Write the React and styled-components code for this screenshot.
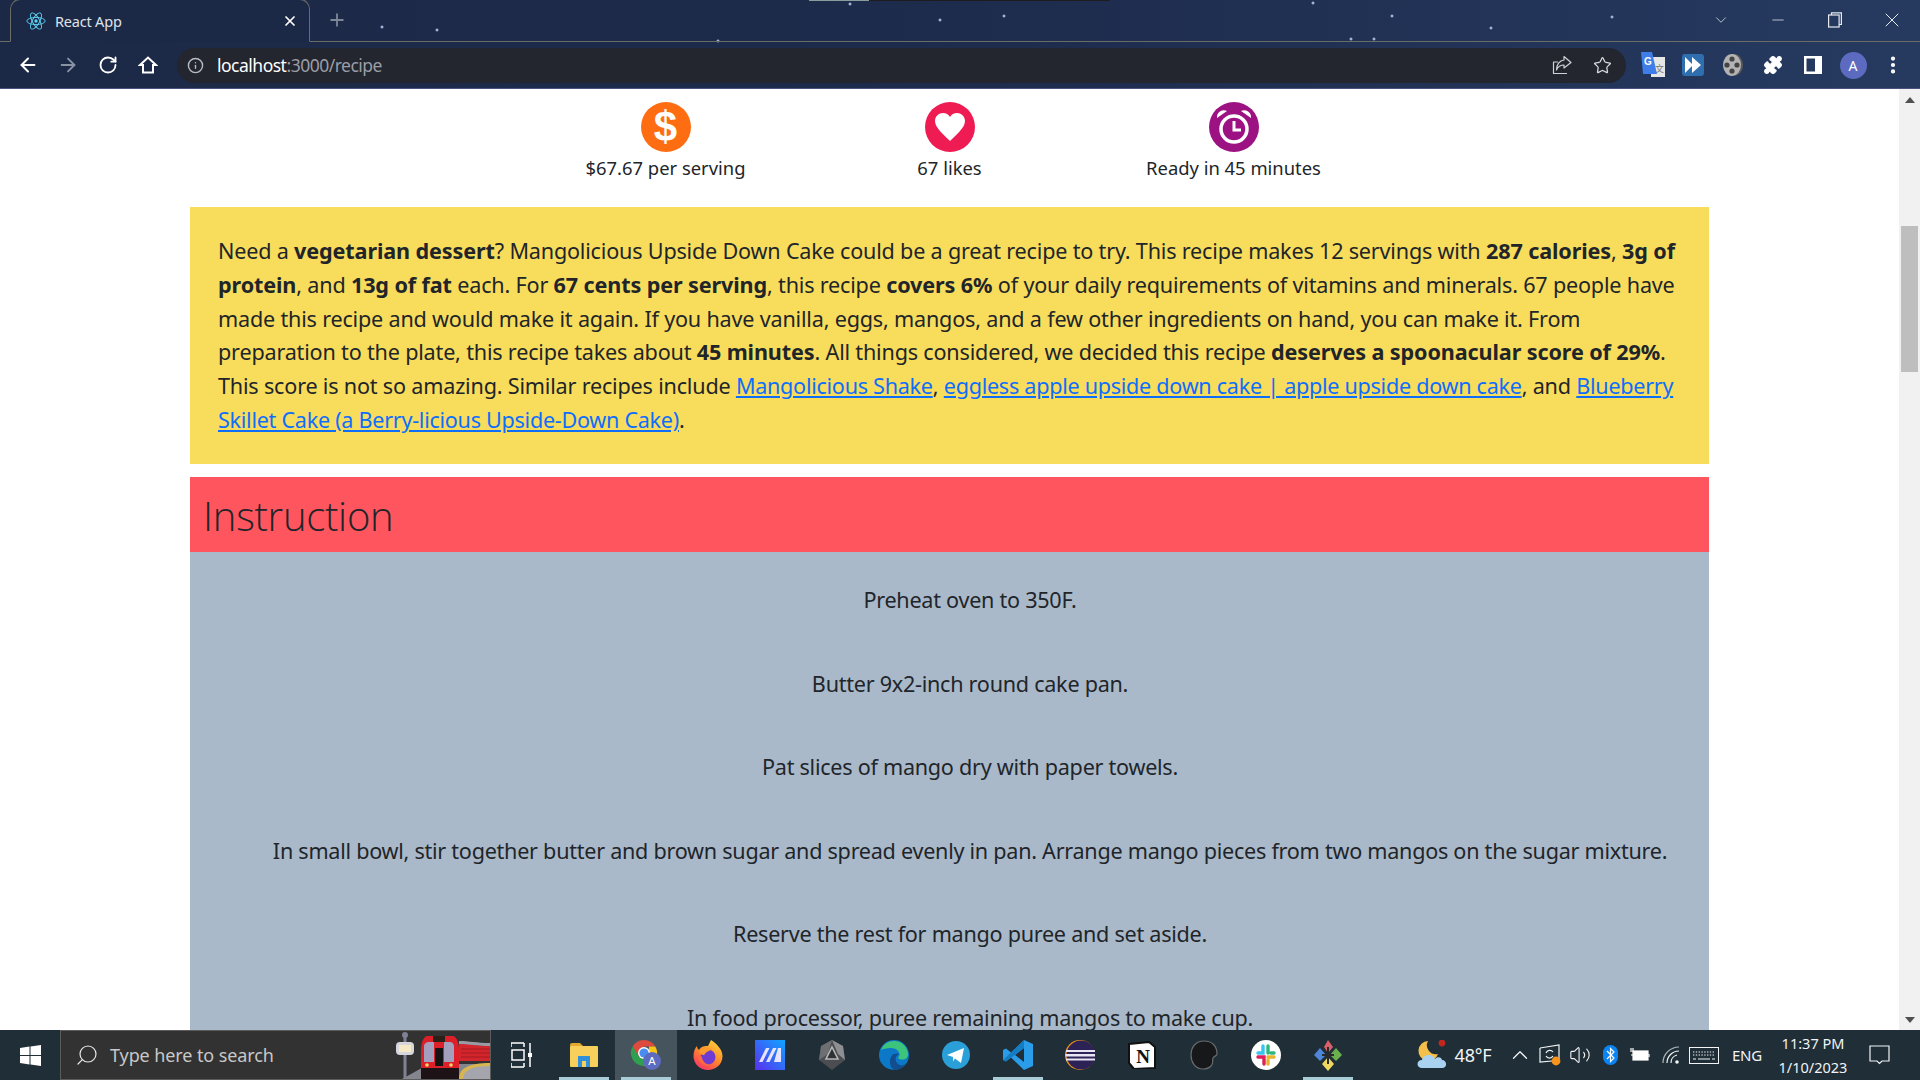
import React from 'react'
import styled, { createGlobalStyle } from 'styled-components'
import { ArrowLeft, ArrowRight, RotateCw, Info, Star, Puzzle, Search, X, Plus, ChevronDown, ChevronUp, Minus, EllipsisVertical, Volume2 } from 'lucide-react'

const GlobalStyle = createGlobalStyle`
  html, body { margin: 0; padding: 0; height: 100%; overflow: hidden; background: #fff; }
  * { box-sizing: border-box; }
`

const stars = [
  [382, 27], [437, 30], [850, 4], [940, 20], [1004, 16], [1313, 3], [1392, 16], [1491, 28], [1612, 17], [1351, 39], [1374, 39], [718, 41]
]
const starBg = stars.map(([x, y]) => `radial-gradient(circle at ${x}px ${y}px, #b9c7e6 0, #8fa3c9 1.2px, transparent 1.8px)`).join(', ')

const Screen = styled.div`
  width: 1920px;
  height: 1080px;
  display: flex;
  flex-direction: column;
  overflow: hidden;
  font-family: "Noto Sans", "Open Sans", sans-serif;
  color: #212529;
`
const BrowserChrome = styled.header`
  height: 89px;
  flex: none;
  display: flex;
  flex-direction: column;
  background:
    linear-gradient(#8b9c9c, #8b9c9c) 809px 0 / 60px 1px no-repeat,
    linear-gradient(#1d1d20, #1d1d20) 869px 0 / 241px 1px no-repeat,
    ${starBg},
    linear-gradient(90deg, #1c2946 0%, #1d2b4c 50%, #263a60 100%);
  border-bottom: 1px solid #4b5280;
`
const TabStrip = styled.div`
  height: 42px;
  flex: none;
  display: flex;
  align-items: flex-end;
  padding-left: 10px;
  border-bottom: 1px solid #6a6c66;
`
const Tab = styled.div`
  width: 300px;
  height: 43px;
  margin-bottom: -1px;
  display: flex;
  align-items: center;
  padding: 0 11px 0 15px;
  border: 1px solid #6a6c66;
  border-bottom: 1px solid #1c2946;
  border-radius: 10px 10px 0 0;
  background: #1c2946;
  color: #dfe3ea;
  font-size: 14.5px;
`
const TabTitle = styled.span`
  flex: 1;
  margin-left: 9px;
  letter-spacing: -0.2px;
`
const NewTab = styled.div`
  width: 54px;
  height: 42px;
  display: flex;
  align-items: center;
  justify-content: center;
  color: #7d8797;
`
const Spacer = styled.div`
  flex: 1;
`
const WinButton = styled.div`
  width: 57px;
  height: 42px;
  display: flex;
  align-items: center;
  justify-content: center;
  color: #e8ebf0;
`
const Toolbar = styled.div`
  flex: 1;
  display: flex;
  align-items: center;
  padding: 0 8px;
`
const ToolButton = styled.div`
  width: ${p => p.$w || 40}px;
  height: 40px;
  flex: none;
  display: flex;
  align-items: center;
  justify-content: center;
  color: ${p => p.$dim ? '#8a93a3' : '#fff'};
`
const Omnibox = styled.div`
  width: 1449px;
  height: 35px;
  margin: 0 7px 0 9px;
  flex: none;
  display: flex;
  align-items: center;
  padding: 0 4px 0 10px;
  border-radius: 18px;
  background: #23252f;
  color: #b9bcc3;
`
const Url = styled.div`
  flex: 1;
  margin-left: 13px;
  font-size: 17.5px;
  letter-spacing: -0.5px;
  color: #9b9ea6;
  span { color: #fff; }
`
const Avatar = styled.div`
  width: 27px;
  height: 27px;
  border-radius: 50%;
  background: #5c6bc0;
  color: #fff;
  font-size: 14px;
  display: flex;
  align-items: center;
  justify-content: center;
`
const Viewport = styled.div`
  flex: 1;
  min-height: 0;
  display: flex;
  overflow: hidden;
`
const Page = styled.main`
  flex: 1;
  min-width: 0;
  height: 100%;
  overflow: hidden;
  padding: 13px 190px 0 190px;
  background: #fff;
`
const Stats = styled.section`
  display: flex;
  justify-content: center;
  height: 105px;
`
const Stat = styled.div`
  width: 284px;
  display: flex;
  flex-direction: column;
  align-items: center;
  font-size: 18.4px;
  line-height: 28px;
`
const StatIcon = styled.div`
  width: 50px;
  height: 50px;
  margin-bottom: 2px;
  border-radius: 50%;
  background: ${p => p.$bg};
  display: flex;
  align-items: center;
  justify-content: center;
`
const DollarGlyph = styled.span`
  font-family: "Liberation Sans", sans-serif;
  font-weight: 700;
  font-size: 42px;
  line-height: 50px;
  color: #fff;
`
const Summary = styled.section`
  background: #f8dc5c;
  padding: 27px 28px 0;
  height: 257px;
  font-size: 21.6px;
  line-height: 33.8px;
  letter-spacing: -0.19px;
  b { font-weight: 700; letter-spacing: -0.12px; }
  a { color: #0d6efd; text-decoration: underline; letter-spacing: -0.28px; }
`
const SectionTitle = styled.h2`
  margin: 13px 0 0;
  height: 75px;
  padding: 15px 13px 0;
  background: #ff555f;
  font-family: "Open Sans", sans-serif;
  font-weight: 300;
  font-size: 40px;
  line-height: 48px;
  letter-spacing: -0.27px;
`
const Steps = styled.section`
  background: #a9b9c9;
  padding: 31px 0 60px 41px;
  text-align: center;
  font-size: 21.6px;
  letter-spacing: -0.265px;
`
const Step = styled.p`
  margin: 0 0 49.8px;
  line-height: 33.8px;
`
const Scrollbar = styled.aside`
  width: 21px;
  flex: none;
  background: #f1f1f1;
  display: flex;
  flex-direction: column;
  align-items: center;
`
const ScrollArrow = styled.div`
  height: 21px;
  flex: none;
  display: flex;
  align-items: center;
  justify-content: center;
`
const Thumb = styled.div`
  width: 17px;
  height: 146px;
  margin-top: 116px;
  flex: none;
  background: #bebebe;
`
const Taskbar = styled.footer`
  height: 50px;
  flex: none;
  display: flex;
  align-items: stretch;
  background: #1f2e37;
  color: #fff;
`
const StartButton = styled.div`
  width: 60px;
  flex: none;
  display: flex;
  align-items: center;
  justify-content: center;
`
const SearchBox = styled.div`
  width: 431px;
  flex: none;
  display: flex;
  align-items: center;
  padding-left: 14px;
  background: #323232;
  border: 1px solid #5c5c5c;
  color: #c8c8c8;
  font-size: 18px;
  overflow: hidden;
  span { flex: 1; margin-left: 11px; letter-spacing: -0.1px; }
`
const TaskButton = styled.div`
  width: 62px;
  flex: none;
  display: flex;
  align-items: center;
  justify-content: center;
  position: relative;
  background: ${p => p.$current ? '#46555d' : 'transparent'};
  &::after {
    content: '';
    display: ${p => p.$open ? 'block' : 'none'};
    position: absolute;
    left: 6px;
    right: 6px;
    bottom: 0;
    height: 3px;
    background: #a9cdd6;
  }
`
const Tray = styled.div`
  flex: 1;
  display: flex;
  align-items: center;
  padding-left: 57px;
`
const TrayItem = styled.div`
  width: ${p => p.$w}px;
  flex: none;
  display: flex;
  align-items: center;
  justify-content: center;
  padding-right: ${p => p.$pr || 0}px;
  font-size: ${p => p.$fs || 16}px;
  color: #f2f4f5;
  letter-spacing: -0.2px;
`
const Clock = styled.div`
  width: 80px;
  flex: none;
  text-align: center;
  font-size: 14.5px;
  line-height: 24px;
  color: #f2f4f5;
  white-space: nowrap;
`

function ReactLogo() {
  return (
    <svg width="20" height="20" viewBox="-12 -12 24 24" fill="none" stroke="#5ed3f3" strokeWidth="1.1">
      <circle r="2" fill="#5ed3f3" stroke="none" />
      <ellipse rx="11" ry="4.3" />
      <ellipse rx="11" ry="4.3" transform="rotate(60)" />
      <ellipse rx="11" ry="4.3" transform="rotate(120)" />
    </svg>
  )
}

function HomeIcon() {
  return (
    <svg width="20" height="20" viewBox="0 0 20 20" fill="none" stroke="#fff" strokeWidth="2" strokeLinejoin="miter">
      <path d="M2 10 L10 2.5 L18 10 H15 V17.5 H5 V10 Z" />
    </svg>
  )
}

function ShareIcon() {
  return (
    <svg width="20" height="20" viewBox="0 0 20 20" fill="none" stroke="#cfd1d6" strokeWidth="1.2" strokeLinejoin="round">
      <path d="M15 18.5 H1.5 V7 H6" />
      <path d="M12 1.5 L19 7.5 L12 13 V10 C8.5 10 6 11.5 4.5 15 C4.5 9.5 7.5 5.5 12 5Z" />
    </svg>
  )
}

function SidePanelIcon() {
  return (
    <svg width="18" height="18" viewBox="0 0 18 18">
      <path fillRule="evenodd" fill="#fff" d="M0 0H18V18H0Z M2.5 2.5V15.5H11V2.5Z" />
    </svg>
  )
}

function Translate() {
  return (
    <svg width="24" height="26" viewBox="0 0 24 26">
      <rect x="10" y="5" width="14" height="20" fill="#e6e6e6" />
      <text x="14" y="20" fontSize="9" fill="#777" fontFamily="Noto Sans CJK SC">文</text>
      <path d="M0 0H11L16 22H2Z" fill="#3f7de8" />
      <text x="3" y="13" fontSize="10" fontWeight="700" fill="#fff" fontFamily="Liberation Sans">G</text>
    </svg>
  )
}

function FastForward() {
  return (
    <svg width="22" height="22" viewBox="0 0 22 22">
      <rect width="22" height="22" rx="3" fill="#2f6fb0" />
      <path d="M3 3 L11 11 L3 19Z M10 3 L19 11 L10 19Z" fill="#fff" />
    </svg>
  )
}

function FilmReel() {
  return (
    <svg width="22" height="24" viewBox="0 0 22 24">
      <ellipse cx="12" cy="12" rx="9" ry="11" fill="#5a5a5a" />
      <ellipse cx="10" cy="12" rx="9" ry="11" fill="#b3b3b3" />
      <circle cx="10" cy="6" r="2.6" fill="#444" />
      <circle cx="10" cy="18" r="2.6" fill="#444" />
      <circle cx="5" cy="12" r="2.6" fill="#444" />
      <circle cx="15" cy="12" r="2.6" fill="#444" />
    </svg>
  )
}

function HeartIcon() {
  return (
    <svg width="32" height="30" viewBox="0 0 32 30">
      <path fill="#fff" d="M16 29 C11 24 1 16 1 9 C1 4 5 1 9 1 C12 1 14.6 2.6 16 5 C17.4 2.6 20 1 23 1 C27 1 31 4 31 9 C31 16 21 24 16 29Z" />
    </svg>
  )
}

function AlarmIcon() {
  return (
    <svg width="40" height="40" viewBox="0 0 40 40" fill="none" stroke="#fff">
      <circle cx="20" cy="22" r="13" strokeWidth="3.5" />
      <path d="M20 14 V23 H27" strokeWidth="3" />
      <path d="M3 11 A7 7 0 0 1 13 4 Z M37 11 A7 7 0 0 0 27 4 Z" fill="#fff" stroke="none" />
    </svg>
  )
}

function WindowsLogo() {
  return (
    <svg width="21" height="21" viewBox="0 0 21 21" fill="#fff">
      <path d="M0 3 L9.5 1.6 V10 H0Z M10.5 1.4 L21 0 V10 H10.5Z M0 11 H9.5 V19.4 L0 18Z M10.5 11 H21 V21 L10.5 19.6Z" />
    </svg>
  )
}

function TrainScene() {
  return (
    <svg width="105" height="48" viewBox="0 0 105 48" style={{ flex: 'none' }}>
      <path d="M20 3 V48" stroke="#7f8194" strokeWidth="3" />
      <circle cx="20" cy="4" r="3" fill="#7f8194" />
      <rect x="11" y="11" width="18" height="13" rx="4" fill="#d6d6dc" />
      <rect x="14" y="14" width="12" height="7" fill="#f5e9c6" />
      <path d="M17 48 L44 33 H105 V48Z" fill="#85858d" />
      <path d="M74 12 C84 12 90 15 105 15 V30 H74Z" fill="#d2252c" />
      <path d="M74 10 C84 10 92 12 105 12 V15 C92 15 84 13 74 13Z" fill="#9a9aa4" />
      <path d="M76 18 H105 M76 22 H105 M76 26 H105" stroke="#a81a22" strokeWidth="1.2" />
      <path d="M74 48 C74 37 84 32 105 32 V48Z" fill="#d8b54e" />
      <path d="M78 48 C78 39 87 35 105 35 V48Z" fill="#a5a5ad" />
      <path d="M42 5 H68 C72 6 74 12 74 20 V48 H36 V20 C36 12 38 6 42 5Z" fill="#dc1f28" />
      <path d="M36 37 H74 V48 H36Z" fill="#1d1316" />
      <path d="M39 15 C39 13 41 11 44 11 H49 V31 H39Z M59 11 H65 C67 11 69 13 69 15 V31 H59Z" fill="#a2a0bc" />
      <rect x="50" y="17" width="8" height="18" fill="#141414" />
      <rect x="48" y="5" width="12" height="6" fill="#2a2018" />
      <circle cx="42" cy="34" r="1.8" fill="#f2d66b" />
      <circle cx="66" cy="34" r="1.8" fill="#f2d66b" />
    </svg>
  )
}

function TaskViewIcon() {
  return (
    <svg width="22" height="26" viewBox="0 0 22 26" fill="none" stroke="#fff" strokeWidth="1.5">
      <path d="M0 1 H13 M0 25 H13 M1 8 H13 V18 H1Z M0 5 V1 M13 5 V1 M0 25 V21 M13 25 V21 M19 1 V25" />
      <rect x="17" y="11" width="4" height="4" fill="#fff" stroke="none" />
    </svg>
  )
}

function FolderIcon() {
  return (
    <svg width="28" height="26" viewBox="0 0 28 26">
      <path d="M0 3 Q0 1 2 1 H10 L13 4 H0Z" fill="#e3a92e" />
      <rect y="4" width="28" height="21" rx="1" fill="#f8cf5b" />
      <path d="M8 14 H20 V25 H16 V19 H12 V25 H8Z" fill="#2f8fd8" />
    </svg>
  )
}

function ChromeIcon() {
  return (
    <svg width="32" height="32" viewBox="0 0 32 32">
      <path d="M14 1 A13 13 0 0 1 25.3 7.5 H14 Z" fill="#dd4b3e" />
      <path d="M14 1 A13 13 0 0 0 2.7 7.5 L8 17 L14 7.5Z" fill="#dd4b3e" />
      <path d="M2.7 7.5 A13 13 0 0 0 14 27 L19 18 H9Z" fill="#2fa04d" />
      <path d="M25.3 7.5 A13 13 0 0 1 14 27 L19 18 V7.5Z" fill="#f5c518" />
      <circle cx="14" cy="14" r="6" fill="#fff" />
      <circle cx="14" cy="14" r="4.6" fill="#4a8df0" />
      <circle cx="22" cy="22" r="9" fill="#5c6bc0" />
      <text x="22" y="26" textAnchor="middle" fontSize="11" fill="#fff" fontFamily="Liberation Sans">A</text>
    </svg>
  )
}

function FirefoxIcon() {
  return (
    <svg width="30" height="30" viewBox="0 0 30 30">
      <defs>
        <linearGradient id="ff" x1="0.8" y1="0" x2="0.2" y2="1">
          <stop offset="0" stopColor="#ffd43a" />
          <stop offset="0.5" stopColor="#ff8a2a" />
          <stop offset="1" stopColor="#f5306a" />
        </linearGradient>
      </defs>
      <path d="M18 0 C24 4 30 10 29.5 17 C29 25 22 30 15 30 C7 30 0.5 24 0.5 16 C0.5 12 2 8 4 6 C4 8 5 9 6 10 C8 6 12 6 15 6 C16 4 17 2 18 0Z" fill="url(#ff)" />
      <circle cx="15" cy="17" r="7.5" fill="#6f3bd0" />
      <path d="M6 11 C9 7 15 7 19 10 C16 10.5 13 12 11 15 C9 15.5 7 14 6 11Z" fill="#ff9a2e" />
      <path d="M5 15 C5 22 11 27 18 25 C13 25 9 21 8.5 16Z" fill="#ff6b3a" />
    </svg>
  )
}

function MakeIcon() {
  return (
    <svg width="30" height="30" viewBox="0 0 30 30">
      <defs>
        <linearGradient id="mk" x1="0" y1="1" x2="1" y2="0">
          <stop offset="0" stopColor="#5b2ff0" />
          <stop offset="1" stopColor="#0ea5ff" />
        </linearGradient>
      </defs>
      <rect width="30" height="30" fill="url(#mk)" />
      <path d="M4 22 L11 8 H14.5 L7.5 22Z M11 22 L18 8 H21.5 L14.5 22Z M19 22 L23 8 H26 V22Z" fill="#e6e4ff" />
    </svg>
  )
}

function HexIcon() {
  return (
    <svg width="26" height="30" viewBox="0 0 26 30">
      <path d="M13 0 L24 6 L26 20 L13 30 L0 20 L2 6Z" fill="#4b4d50" />
      <path d="M13 0 L24 6 L26 20 L19 14Z" fill="#8d8f92" />
      <path d="M13 0 L2 6 L0 20 L9 14Z" fill="#6d6f72" />
      <path d="M13 7 L19 19 H7Z" fill="#2f3133" stroke="#b5b7b9" strokeWidth="1.6" />
    </svg>
  )
}

function EdgeIcon() {
  return (
    <svg width="30" height="30" viewBox="0 0 30 30">
      <circle cx="15" cy="15" r="15" fill="#0c78c8" />
      <path d="M2 10 C6 -2 26 -3 29 13 C30 20 22 21 19 18 C23 13 18 8 12 8 C7 8 4 9 2 10Z" fill="#3cc47c" />
      <path d="M11 22 C11 15 15 12 21 14 C16 15 15 20 19 24 C21 26 25 26 27 23 C24 28 19 30 15 30 C12 28 11 25 11 22Z" fill="#124d8f" />
    </svg>
  )
}

function TelegramIcon() {
  return (
    <svg width="28" height="28" viewBox="0 0 28 28">
      <circle cx="14" cy="14" r="14" fill="#2a9fd8" />
      <path d="M5 14 L22 7 L19 22 L13 17.5 L11 20.5 V16Z" fill="#fff" />
    </svg>
  )
}

function VsCodeIcon() {
  return (
    <svg width="30" height="30" viewBox="0 0 30 30">
      <path d="M21 0 L30 4 V26 L21 30 L8 17.5 L3 21.5 L0 20 V10 L3 8.5 L8 12.5Z M21 8 L12 15 L21 22Z" fill="#2a9ce8" fillRule="evenodd" />
      <path d="M0 20 L21 0 V8 L3 21.5Z" fill="#0e74b8" opacity="0.8" />
    </svg>
  )
}

function EclipseIcon() {
  return (
    <svg width="30" height="30" viewBox="0 0 30 30">
      <circle cx="15" cy="15" r="15" fill="#f7941e" />
      <circle cx="16" cy="15" r="14.5" fill="#2c2255" />
      <path d="M1 10 H30 V12 H1Z M0.5 14 H30 V16.5 H0.5Z M1 18.5 H30 V20.5 H1Z" fill="#e8e4f4" />
    </svg>
  )
}

function NotionIcon() {
  return (
    <svg width="28" height="28" viewBox="0 0 28 28">
      <path d="M1 3 L21 1 L27 6 V27 L6 28 L1 22Z" fill="#fff" stroke="#111" strokeWidth="2" />
      <text x="15" y="22" textAnchor="middle" fontFamily="Liberation Serif" fontWeight="700" fontSize="19" fill="#111">N</text>
    </svg>
  )
}

function DarkBlobIcon() {
  return (
    <svg width="28" height="30" viewBox="0 0 28 30">
      <path d="M14 1 C22 1 27 6 27 14 C27 16 24 16 23 18 C22 21 24 23 21 26 C18 29 15 29 13 29 C5 29 1 22 1 15 C1 7 6 1 14 1Z" fill="#17181a" stroke="#6a6c6e" strokeWidth="1.2" />
    </svg>
  )
}

function SlackIcon() {
  return (
    <svg width="30" height="30" viewBox="0 0 30 30">
      <circle cx="15" cy="15" r="15" fill="#fff" />
      <path d="M12 6 V13 H7" stroke="#36c5f0" strokeWidth="3.4" fill="none" strokeLinecap="round" />
      <path d="M17 6 V13 M20 13 H23" stroke="#2eb67d" strokeWidth="3.4" fill="none" strokeLinecap="round" />
      <path d="M7 17 H13 V24" stroke="#e01e5a" strokeWidth="3.4" fill="none" strokeLinecap="round" />
      <path d="M17 17 H23 M17 20 V24" stroke="#ecb22e" strokeWidth="3.4" fill="none" strokeLinecap="round" />
    </svg>
  )
}

function GitKrakenIcon() {
  return (
    <svg width="30" height="32" viewBox="0 0 30 32">
      <path d="M15 1 L20 8 L15 14 L11 8Z" fill="#d9606a" />
      <path d="M7 9 L13 16 L7 22 L1 16Z" fill="#4f86d8" />
      <path d="M23 9 L29 16 L23 22 L17 16Z" fill="#6ab04c" />
      <path d="M15 18 L21 25 L15 32 L9 25Z" fill="#f0d860" />
      <path d="M15 8 V25 M9 16 H21" stroke="#2a2a2a" strokeWidth="2" />
    </svg>
  )
}

function WeatherIcon() {
  return (
    <svg width="32" height="30" viewBox="0 0 32 30">
      <path d="M12 1 A10 10 0 1 0 22 14 A9 9 0 0 1 12 1Z" fill="#f4c04a" />
      <path d="M6 28 C0 28 0 20 6 20 C7 14 17 13 19 19 C21 16 26 17 26 20 C31 20 32 28 26 28Z" fill="#a9d2f0" />
      <circle cx="26" cy="3" r="3.4" fill="#c0281f" />
    </svg>
  )
}

function NetworkBoxIcon() {
  return (
    <svg width="22" height="22" viewBox="0 0 22 22" fill="none" stroke="#f2f4f5" strokeWidth="1.2">
      <path d="M1 4 L20 1 V15 M1 4 V18 L13 17" />
      <path d="M7 9 A4 4 0 0 1 14 8 M14 12 A4 4 0 0 1 7 12" />
      <circle cx="17" cy="17" r="4.4" fill="#f7941e" stroke="none" />
    </svg>
  )
}

function BluetoothIcon() {
  return (
    <svg width="15" height="20" viewBox="0 0 15 20">
      <rect width="15" height="20" rx="7.5" fill="#0a84f0" />
      <path d="M4 6 L11 13 L7.5 16.5 V3.5 L11 7 L4 14" fill="none" stroke="#fff" strokeWidth="1.2" />
    </svg>
  )
}

function BatteryIcon() {
  return (
    <svg width="20" height="16" viewBox="0 0 20 16" fill="none" stroke="#fff" strokeWidth="1.2">
      <rect x="3" y="4" width="15" height="9" fill="#fff" />
      <path d="M19 7 V10 M3 8 H1 M1 1 V5 M3 1 V5" />
    </svg>
  )
}

function WifiIcon() {
  return (
    <svg width="18" height="18" viewBox="0 0 18 18" fill="none" stroke="#f2f4f5" strokeWidth="1.2">
      <path d="M1 17 A16 16 0 0 1 17 1" opacity="0.7" />
      <path d="M5 17 A12 12 0 0 1 17 5" />
      <path d="M9 17 A8 8 0 0 1 15 9" />
      <circle cx="15" cy="16" r="1.8" fill="#f2f4f5" stroke="none" />
    </svg>
  )
}

function KeyboardIcon() {
  return (
    <svg width="30" height="17" viewBox="0 0 30 17" fill="none" stroke="#f2f4f5" strokeWidth="1">
      <rect x="0.5" y="0.5" width="29" height="16" />
      <path d="M4 5 H26 M4 8 H26" strokeDasharray="1.4 1.4" />
      <path d="M9 12 H21 M4 12 H7 M23 12 H26" />
    </svg>
  )
}

function NotificationIcon() {
  return (
    <svg width="21" height="20" viewBox="0 0 21 20" fill="none" stroke="#f2f4f5" strokeWidth="1.2">
      <path d="M1 1 H20 V16 H13 L10.5 18.5 L8 16 H1Z" />
    </svg>
  )
}

const stepTexts = [
  'Preheat oven to 350F.',
  'Butter 9x2-inch round cake pan.',
  'Pat slices of mango dry with paper towels.',
  'In small bowl, stir together butter and brown sugar and spread evenly in pan. Arrange mango pieces from two mangos on the sugar mixture.',
  'Reserve the rest for mango puree and set aside.',
  'In food processor, puree remaining mangos to make cup.',
]

const taskApps = [
  { icon: <TaskViewIcon /> },
  { icon: <FolderIcon />, open: true },
  { icon: <ChromeIcon />, open: true, current: true },
  { icon: <FirefoxIcon /> },
  { icon: <MakeIcon /> },
  { icon: <HexIcon /> },
  { icon: <EdgeIcon /> },
  { icon: <TelegramIcon /> },
  { icon: <VsCodeIcon />, open: true },
  { icon: <EclipseIcon /> },
  { icon: <NotionIcon /> },
  { icon: <DarkBlobIcon /> },
  { icon: <SlackIcon /> },
  { icon: <GitKrakenIcon />, open: true },
]

export default function App() {
  return (
    <Screen>
      <GlobalStyle />
      <BrowserChrome>
        <TabStrip>
          <Tab>
            <ReactLogo />
            <TabTitle>React App</TabTitle>
            <X size={16} strokeWidth={2.6} color="#fff" />
          </Tab>
          <NewTab><Plus size={20} strokeWidth={2.2} /></NewTab>
          <Spacer />
          <WinButton><ChevronDown size={18} strokeWidth={1} /></WinButton>
          <WinButton><Minus size={18} strokeWidth={1} /></WinButton>
          <WinButton>
            <svg width="14" height="16" viewBox="0 0 14 16" fill="none" stroke="#e8ebf0" strokeWidth="1.2">
              <rect x="0.6" y="3" width="10.5" height="12" />
              <path d="M3.5 3 V0.8 H13.4 V12.5 H11" />
            </svg>
          </WinButton>
          <WinButton><X size={24} strokeWidth={1} /></WinButton>
        </TabStrip>
        <Toolbar>
          <ToolButton><ArrowLeft size={22} strokeWidth={2.2} /></ToolButton>
          <ToolButton $dim><ArrowRight size={22} strokeWidth={2} /></ToolButton>
          <ToolButton><RotateCw size={20} strokeWidth={2.2} /></ToolButton>
          <ToolButton><HomeIcon /></ToolButton>
          <Omnibox>
            <Info size={17} strokeWidth={2} />
            <Url><span>localhost</span>:3000/recipe</Url>
            <ToolButton><ShareIcon /></ToolButton>
            <ToolButton><Star size={19} strokeWidth={1.6} color="#d8dade" /></ToolButton>
          </Omnibox>
          <ToolButton><Translate /></ToolButton>
          <ToolButton><FastForward /></ToolButton>
          <ToolButton><FilmReel /></ToolButton>
          <ToolButton><Puzzle size={20} fill="#fff" strokeWidth={1.5} /></ToolButton>
          <ToolButton><SidePanelIcon /></ToolButton>
          <ToolButton><Avatar>A</Avatar></ToolButton>
          <ToolButton><EllipsisVertical size={22} strokeWidth={2.6} /></ToolButton>
        </Toolbar>
      </BrowserChrome>

      <Viewport>
        <Page>
          <Stats>
            <Stat>
              <StatIcon $bg="#ff6d12"><DollarGlyph>$</DollarGlyph></StatIcon>
              $67.67 per serving
            </Stat>
            <Stat>
              <StatIcon $bg="#ee1c52"><HeartIcon /></StatIcon>
              67 likes
            </Stat>
            <Stat>
              <StatIcon $bg="#9c1282"><AlarmIcon /></StatIcon>
              Ready in 45 minutes
            </Stat>
          </Stats>
          <Summary>
            Need a <b>vegetarian dessert</b>? Mangolicious Upside Down Cake could be a great recipe to try. This recipe makes 12 servings with <b>287 calories</b>, <b>3g of protein</b>, and <b>13g of fat</b> each. For <b>67 cents per serving</b>, this recipe <b>covers 6%</b> of your daily requirements of vitamins and minerals. 67 people have made this recipe and would make it again. If you have vanilla, eggs, mangos, and a few other ingredients on hand, you can make it. From preparation to the plate, this recipe takes about <b>45 minutes</b>. All things considered, we decided this recipe <b>deserves a spoonacular score of 29%</b>. This score is not so amazing. Similar recipes include <a href="#a">Mangolicious Shake</a>, <a href="#b">eggless apple upside down cake | apple upside down cake</a>, and <a href="#c">Blueberry Skillet Cake (a Berry-licious Upside-Down Cake)</a>.
          </Summary>
          <SectionTitle>Instruction</SectionTitle>
          <Steps>
            {stepTexts.map((t) => <Step key={t}>{t}</Step>)}
          </Steps>
        </Page>
        <Scrollbar>
          <ScrollArrow>
            <svg width="10" height="6" viewBox="0 0 10 6"><path d="M0 6 L5 0 L10 6Z" fill="#505050" /></svg>
          </ScrollArrow>
          <Thumb />
          <Spacer />
          <ScrollArrow>
            <svg width="10" height="6" viewBox="0 0 10 6"><path d="M0 0 L5 6 L10 0Z" fill="#505050" /></svg>
          </ScrollArrow>
        </Scrollbar>
      </Viewport>

      <Taskbar>
        <StartButton><WindowsLogo /></StartButton>
        <SearchBox>
          <Search size={24} strokeWidth={1.2} style={{ transform: 'scaleX(-1)' }} color="#e8e8e8" />
          <span>Type here to search</span>
          <TrainScene />
        </SearchBox>
        {taskApps.map((app, i) => (
          <TaskButton key={i} $open={app.open} $current={app.current}>{app.icon}</TaskButton>
        ))}
        <Tray>
          <WeatherIcon />
          <TrayItem $w={57} $pr={7} $fs={18}>48°F</TrayItem>
          <TrayItem $w={30}><ChevronUp size={26} strokeWidth={1.2} /></TrayItem>
          <TrayItem $w={30}><NetworkBoxIcon /></TrayItem>
          <TrayItem $w={30}><Volume2 size={22} strokeWidth={1.2} /></TrayItem>
          <TrayItem $w={30}><BluetoothIcon /></TrayItem>
          <TrayItem $w={30}><BatteryIcon /></TrayItem>
          <TrayItem $w={32}><WifiIcon /></TrayItem>
          <TrayItem $w={34}><KeyboardIcon /></TrayItem>
          <TrayItem $w={52} $fs={15}>ENG</TrayItem>
          <Clock>11:37 PM<br />1/10/2023</Clock>
          <TrayItem $w={52}><NotificationIcon /></TrayItem>
        </Tray>
      </Taskbar>
    </Screen>
  )
}
